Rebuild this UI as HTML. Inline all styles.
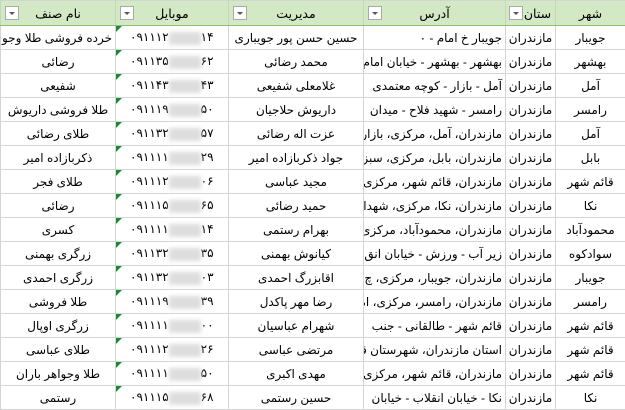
<!DOCTYPE html>
<html><head><meta charset="utf-8"><style>
body{margin:0;background:#fff;width:625px;height:410px;overflow:hidden;font-family:"Liberation Sans","DejaVu Sans",sans-serif;}
table{border-collapse:collapse;table-layout:fixed;direction:rtl;width:625px;}
td,th{height:23px;border:1px solid #d4d4d4;font-size:12px;white-space:nowrap;overflow:hidden;padding:0 3px;color:#000;font-weight:normal;position:relative}
th{height:24px;background:#d3e8c4;border-bottom:1px solid #8fbf73;border-left:1px solid #c4d8b6;text-align:center;font-size:12.5px}
td{text-align:center}
td.p{padding:0 1px;text-align:center}
td.a{text-align:right;padding-right:3px}
.dd{position:absolute;left:4px;top:5px;width:12px;height:12px;border:1px solid #a9a9a9;background:#fff}
.dd:after{content:"";position:absolute;left:3px;top:5px;border-left:3px solid transparent;border-right:3px solid transparent;border-top:3px solid #555}
.m{direction:ltr;position:relative;padding-left:14px;text-align:left}
.m:before{content:"";position:absolute;left:0;top:0;border-top:6px solid #1d8a3a;border-right:6px solid transparent}
.bl{display:inline-block;width:32px;height:13px;background:#ddd;filter:blur(2px);vertical-align:middle}
</style></head><body>
<table>
<colgroup><col style="width:70px"><col style="width:50px"><col style="width:142px"><col style="width:135px"><col style="width:113px"><col style="width:115px"></colgroup>
<tr><th>شهر</th><th style="padding:0 0 0 14px">ستان<span class="dd" style="left:3px"></span></th><th>آدرس<span class="dd"></span></th><th>مدیریت<span class="dd"></span></th><th>موبایل<span class="dd"></span></th><th>نام صنف<span class="dd"></span></th></tr>
<tr><td>جویبار</td><td class="p">مازندران</td><td class="a">جویبار خ امام - ۰</td><td>حسین حسن پور جویباری</td><td class="m">۰۹۱۱۱۲<span class="bl"></span>۱۴</td><td class="a">خرده فروشی طلا وجواهر</td></tr>
<tr><td>بهشهر</td><td class="p">مازندران</td><td class="a">بهشهر - بهشهر - خیابان امام</td><td>محمد رضائی</td><td class="m">۰۹۱۱۳۵<span class="bl"></span>۶۲</td><td>رضائی</td></tr>
<tr><td>آمل</td><td class="p">مازندران</td><td class="a">آمل - بازار - کوچه معتمدی</td><td>غلامعلی شفیعی</td><td class="m">۰۹۱۱۴۳<span class="bl"></span>۴۳</td><td>شفیعی</td></tr>
<tr><td>رامسر</td><td class="p">مازندران</td><td class="a">رامسر - شهید فلاح - میدان</td><td>داریوش حلاجیان</td><td class="m">۰۹۱۱۱۹<span class="bl"></span>۵۰</td><td>طلا فروشی داریوش</td></tr>
<tr><td>آمل</td><td class="p">مازندران</td><td class="a">مازندران، آمل، مرکزی، بازار،</td><td>عزت اله رضائی</td><td class="m">۰۹۱۱۳۲<span class="bl"></span>۵۷</td><td>طلای رضائی</td></tr>
<tr><td>بابل</td><td class="p">مازندران</td><td class="a">مازندران، بابل، مرکزی، سبزه</td><td>جواد ذکربازاده امیر</td><td class="m">۰۹۱۱۱۱<span class="bl"></span>۲۹</td><td>ذکربازاده امیر</td></tr>
<tr><td>قائم شهر</td><td class="p">مازندران</td><td class="a">مازندران، قائم شهر، مرکزی،</td><td>مجید عباسی</td><td class="m">۰۹۱۱۱۲<span class="bl"></span>۰۶</td><td>طلای فجر</td></tr>
<tr><td>نکا</td><td class="p">مازندران</td><td class="a">مازندران، نکا، مرکزی، شهدا</td><td>حمید رضائی</td><td class="m">۰۹۱۱۱۵<span class="bl"></span>۶۵</td><td>رضائی</td></tr>
<tr><td>محمودآباد</td><td class="p">مازندران</td><td class="a">مازندران، محمودآباد، مرکزی،</td><td>بهرام رستمی</td><td class="m">۰۹۱۱۱۱<span class="bl"></span>۱۴</td><td>کسری</td></tr>
<tr><td>سوادکوه</td><td class="p">مازندران</td><td class="a">زیر آب - ورزش - خیابان انق</td><td>کیانوش بهمنی</td><td class="m">۰۹۱۱۳۲<span class="bl"></span>۳۵</td><td>زرگری بهمنی</td></tr>
<tr><td>جویبار</td><td class="p">مازندران</td><td class="a">مازندران، جویبار، مرکزی، چ</td><td>اقابزرگ احمدی</td><td class="m">۰۹۱۱۳۲<span class="bl"></span>۰۳</td><td>زرگری احمدی</td></tr>
<tr><td>رامسر</td><td class="p">مازندران</td><td class="a">مازندران، رامسر، مرکزی، اما</td><td>رضا مهر پاکدل</td><td class="m">۰۹۱۱۱۹<span class="bl"></span>۳۹</td><td>طلا فروشی</td></tr>
<tr><td>قائم شهر</td><td class="p">مازندران</td><td class="a">قائم شهر - طالقانی - جنب</td><td>شهرام عباسیان</td><td class="m">۰۹۱۱۱۱<span class="bl"></span>۰۰</td><td>زرگری اوپال</td></tr>
<tr><td>قائم شهر</td><td class="p">مازندران</td><td class="a">استان مازندران، شهرستان قا</td><td>مرتضی عباسی</td><td class="m">۰۹۱۱۱۲<span class="bl"></span>۲۶</td><td>طلای عباسی</td></tr>
<tr><td>قائم شهر</td><td class="p">مازندران</td><td class="a">مازندران، قائم شهر، مرکزی،</td><td>مهدی اکبری</td><td class="m">۰۹۱۱۱۱<span class="bl"></span>۵۰</td><td>طلا وجواهر باران</td></tr>
<tr><td>نکا</td><td class="p">مازندران</td><td class="a">نکا - خیابان انقلاب - خیابان</td><td>حسین رستمی</td><td class="m">۰۹۱۱۱۵<span class="bl"></span>۶۸</td><td>رستمی</td></tr>
</table>
</body></html>
